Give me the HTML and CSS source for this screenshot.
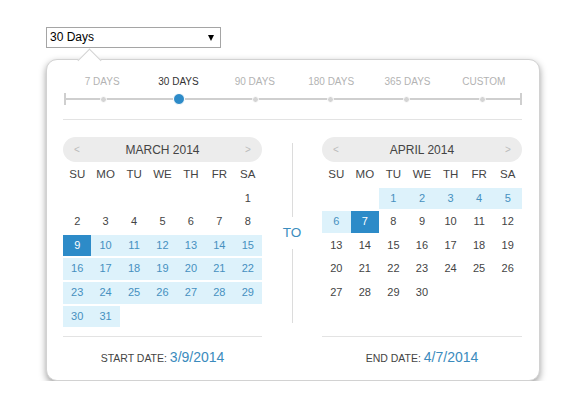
FILE: index.html
```html
<!DOCTYPE html>
<html lang="en">
<head>
  <meta charset="UTF-8">
  <title>Date range picker</title>
  <link rel="stylesheet" href="styles.css">
</head>
<body>
  <div class="wrap">
    <div class="select">
      <span>30 Days</span>
      <i class="caret"></i>
    </div>

    <div class="picker">
      <!-- preset ranges -->
      <div class="presets">
        <span>7 DAYS</span>
        <span class="on">30 DAYS</span>
        <span>90 DAYS</span>
        <span>180 DAYS</span>
        <span>365 DAYS</span>
        <span>CUSTOM</span>
      </div>
      <div class="track">
        <i class="dot"></i>
        <i class="dot on"></i>
        <i class="dot"></i>
        <i class="dot"></i>
        <i class="dot"></i>
        <i class="dot"></i>
      </div>
      <hr class="rule">

      <div class="months">
        <div class="cal">
          <div class="cal-head"><span class="nav">&lt;</span><b>MARCH 2014</b><span class="nav">&gt;</span></div>
          <div class="grid">
            <span class="dow">SU</span><span class="dow">MO</span><span class="dow">TU</span><span class="dow">WE</span><span class="dow">TH</span><span class="dow">FR</span><span class="dow">SA</span>
            <span></span><span></span><span></span><span></span><span></span><span></span><span>1</span>
            <span>2</span><span>3</span><span>4</span><span>5</span><span>6</span><span>7</span><span>8</span>
            <span class="pick">9</span><span class="in">10</span><span class="in">11</span><span class="in">12</span><span class="in">13</span><span class="in">14</span><span class="in">15</span>
            <span class="in">16</span><span class="in">17</span><span class="in">18</span><span class="in">19</span><span class="in">20</span><span class="in">21</span><span class="in">22</span>
            <span class="in">23</span><span class="in">24</span><span class="in">25</span><span class="in">26</span><span class="in">27</span><span class="in">28</span><span class="in">29</span>
            <span class="in">30</span><span class="in">31</span>
          </div>
        </div>

        <div class="sep">
          <i class="bar"></i>
          <span class="to">TO</span>
          <i class="bar"></i>
        </div>

        <div class="cal">
          <div class="cal-head"><span class="nav">&lt;</span><b>APRIL 2014</b><span class="nav">&gt;</span></div>
          <div class="grid">
            <span class="dow">SU</span><span class="dow">MO</span><span class="dow">TU</span><span class="dow">WE</span><span class="dow">TH</span><span class="dow">FR</span><span class="dow">SA</span>
            <span></span><span></span><span class="in">1</span><span class="in">2</span><span class="in">3</span><span class="in">4</span><span class="in">5</span>
            <span class="in">6</span><span class="pick">7</span><span>8</span><span>9</span><span>10</span><span>11</span><span>12</span>
            <span>13</span><span>14</span><span>15</span><span>16</span><span>17</span><span>18</span><span>19</span>
            <span>20</span><span>21</span><span>22</span><span>23</span><span>24</span><span>25</span><span>26</span>
            <span>27</span><span>28</span><span>29</span><span>30</span>
          </div>
        </div>
      </div>

      <div class="foot">
        <p>START DATE: <em>3/9/2014</em></p>
        <p>END DATE: <em>4/7/2014</em></p>
      </div>
    </div>
  </div>
</body>
</html>
```

FILE: styles.css
```css
*{
  padding: 0;
  margin: 0;
  box-sizing: border-box;
}
body{
  background: #fff;
  font-family: "Liberation Sans", Arial, sans-serif;
  color: #444;
}
.wrap{
  padding: 27px 0 0 46px;
}

/* fake select */
.select{
  position: relative;
  width: 175px;
  height: 21px;
  border: 1px solid #a5a5a5;
  font-size: 12px;
  line-height: 19px;
  padding-left: 3px;
  color: #000;
}
.caret{
  position: absolute;
  right: 6px;
  top: 7px;
  border-left: 3.5px solid transparent;
  border-right: 3.5px solid transparent;
  border-top: 6px solid #000;
}

/* popup */
.picker{
  position: relative;
  width: 494px;
  margin-top: 11px;
  padding: 15px 17px 14px 16px;
  background: #fff;
  border: 1px solid #d2d2d2;
  border-radius: 11px;
  box-shadow: 0 3px 7px rgba(0,0,0,.38);
}
.picker::before{
  content: "";
  position: absolute;
  left: 34px;
  top: -8.5px;
  width: 16px;
  height: 16px;
  background: #fff;
  border-top: 1px solid #d2d2d2;
  border-left: 1px solid #d2d2d2;
  transform: rotate(45deg);
}

.presets, .track{
  display: grid;
  grid-template-columns: repeat(6, 1fr);
  justify-items: center;
  align-items: center;
}
.presets{
  font-size: 10px;
  line-height: 14px;
  color: #b3b3b3;
  padding-left: 1px;
}
.presets .on{
  color: #333;
}
.track{
  height: 12px;
  margin-top: 4px;
  margin-left: 1px;
  border-left: 2px solid #cfcfcf;
  border-right: 2px solid #cfcfcf;
  background: linear-gradient(#cfcfcf, #cfcfcf) center / 100% 2px no-repeat;
}
.dot{
  width: 7px;
  height: 7px;
  border-radius: 50%;
  background: #d4d4d4;
  border: 1px solid #fff;
}
.dot.on{
  width: 12px;
  height: 12px;
  background: #2d8bc8;
}
.rule{
  border: 0;
  border-top: 1px solid #e3e3e3;
  margin: 14px 0 17px;
}

/* months */
.months{
  display: grid;
  grid-template-columns: 199px 1fr 200px;
}
.cal-head{
  height: 25px;
  border-radius: 12.5px;
  background: #ececec;
  display: grid;
  grid-template-columns: 28px 1fr 28px;
  align-items: center;
  text-align: center;
  font-size: 12px;
  color: #444;
}
.cal-head b{
  font-weight: normal;
}
.nav{
  color: #bbb;
  font-size: 10px;
}
.grid{
  display: grid;
  grid-template-columns: repeat(7, 1fr);
  grid-auto-rows: 21.6px;
  row-gap: 2px;
  margin-top: 2px;
  font-size: 11px;
  text-align: center;
  line-height: 21.6px;
  color: #444;
}
.dow{
  font-size: 11.5px;
}
.grid .in{
  background: #ddf2fb;
  color: #4690bf;
}
.grid .pick{
  background: #2d8bc8;
  color: #fff;
}

.sep{
  display: flex;
  flex-direction: column;
  align-items: center;
  padding: 6px 0 4px;
}
.bar{
  flex: 1;
  width: 1px;
  background: #dcdcdc;
}
.to{
  padding: 9px 0;
  font-size: 13.5px;
  line-height: 14px;
  color: #3b8dbe;
}

/* selected dates */
.foot{
  display: grid;
  grid-template-columns: 199px 200px;
  justify-content: space-between;
  margin-top: 9px;
}
.foot p{
  border-top: 1px solid #e3e3e3;
  padding-top: 12px;
  text-align: center;
  font-size: 10.5px;
  line-height: 16px;
  color: #444;
}
.foot em{
  font-style: normal;
  font-size: 14px;
  color: #3b8bbd;
}
```
